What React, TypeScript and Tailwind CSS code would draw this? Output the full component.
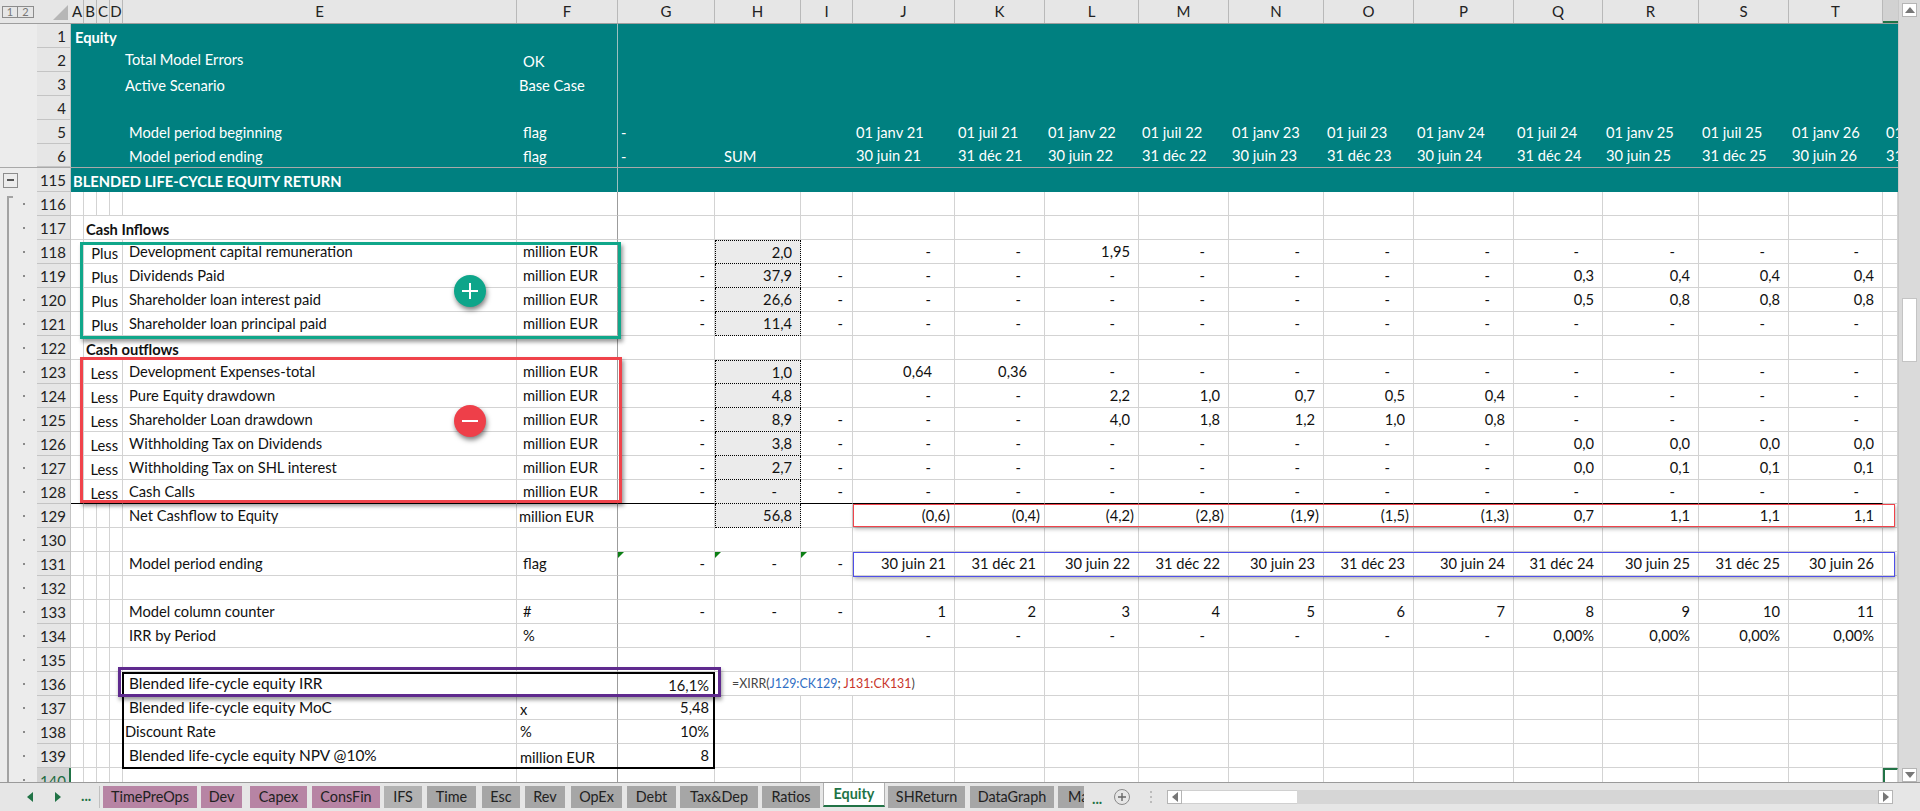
import React from "react";

const GRID = "grid grid-cols-[13px_13px_13px_13px_394px_101px_97px_86px_52px_102px_90px_94px_90px_95px_90px_100px_89px_96px_90px_94px_15px]";
const LETTERS = ["A","B","C","D","E","F","G","H","I","J","K","L","M","N","O","P","Q","R","S","T","U"];

type C = { t?: React.ReactNode; cls?: string };
type Cells = Record<number, C>;

function val(i: number, t: string): C {
  const pr = t === "-" ? (i === 6 || i === 8 ? "pr-[9px]" : "pr-[23px]") : t.startsWith("(") ? "pr-[4px]" : "pr-[8px]";
  return { t, cls: "justify-end " + pr };
}

function series(vals: string[]): Cells {
  const out: Cells = {};
  vals.forEach((v, k) => { out[9 + k] = val(9 + k, v); });
  return out;
}

const dashes = (n: number) => Array.from({ length: n }, () => "-");

function Gutter({ first }: { first?: boolean }) {
  return (
    <div className="w-[37px] h-full flex items-center bg-[#ececec]">
      {first ? (
        <div className="ml-[7px] w-[6px] h-[20px] self-end border-l-2 border-t-2 border-[#a3a3a3]" />
      ) : (
        <div className="ml-[7px] w-[6px] h-full border-l-2 border-[#a3a3a3]" />
      )}
      <div className="ml-[10px] w-[2px] h-[2px] bg-[#8a8a8a]" />
    </div>
  );
}

function Row({ n, cells = {}, noR = [], hTop, hCell, black, selected }: { n: number; cells?: Cells; noR?: number[]; hTop?: boolean; hCell?: boolean; black?: boolean; selected?: boolean }) {
  return (
    <div className="flex h-[24px] shrink-0">
      <Gutter first={n === 116} />
      <div className={selected
        ? "w-[34px] h-full flex items-center justify-end pr-[3px] pt-[2px] bg-[#d2d2d2] border-r-2 border-[#217346] text-[15px] text-[#1d6b41]"
        : "w-[34px] h-full flex items-center justify-end pr-[4px] pt-[2px] bg-[#e6e6e6] border-b border-r border-[#c4c4c4] text-[15px] text-[#222]"}>{n}</div>
      <div className={GRID + " flex-1 bg-white"}>
        {LETTERS.map((_, i) => {
          const c = cells[i] ?? {};
          let b = noR.includes(i) ? "" : i === 5 ? "border-r border-r-[#9c9c9c]" : "border-r border-r-[#d3d3d3]";
          let bb = black && i < 20 ? "border-b border-b-black" : "border-b border-b-[#d3d3d3]";
          let extra = "";
          if (i === 7 && hCell) {
            b = "border-x border-dotted border-x-black";
            bb = black ? "border-b border-b-black" : "border-b border-dotted border-b-black";
            extra = "bg-[#ebebeb] " + (hTop ? "border-t border-dotted border-t-black" : "");
          }
          if (i === 20 && selected) extra = "border-t-2 border-l-2 border-t-[#217346] border-l-[#217346]";
          return (
            <div key={i} className={`h-[24px] flex items-center whitespace-nowrap text-[#111] ${b} ${bb} ${extra} ${c.cls ?? ""}`}>
              {c.t}
            </div>
          );
        })}
      </div>
    </div>
  );
}

function TealRow({ n, cells = {}, last, left }: { n: number; cells?: Cells; last?: boolean; left?: React.ReactNode }) {
  return (
    <div className={`flex h-[24px] shrink-0 ${last ? "border-b border-[#a9a9a9]" : ""}`}>
      <div className="w-[37px] h-full flex items-center bg-[#ececec]">{left}</div>
      <div className="w-[34px] h-full flex items-center justify-end pr-[4px] pt-[2px] bg-[#e6e6e6] border-b border-r border-[#c4c4c4] text-[15px] text-[#222]">{n}</div>
      <div className={GRID + " flex-1 bg-[#008080] text-white overflow-hidden"}>
        {LETTERS.map((_, i) => (
          <div key={i} className={`h-full flex items-center whitespace-nowrap ${i === 5 ? "border-r border-r-[#9cc0c0]" : ""} ${cells[i]?.cls ?? ""}`}>
            {cells[i]?.t}
          </div>
        ))}
      </div>
    </div>
  );
}

const STARTS = ["01 janv 21","01 juil 21","01 janv 22","01 juil 22","01 janv 23","01 juil 23","01 janv 24","01 juil 24","01 janv 25","01 juil 25","01 janv 26","01 juil 26"];
const ENDS = ["30 juin 21","31 déc 21","30 juin 22","31 déc 22","30 juin 23","31 déc 23","30 juin 24","31 déc 24","30 juin 25","31 déc 25","30 juin 26","31 déc 26"];

function dateCells(list: string[]): Cells {
  const out: Cells = {};
  list.forEach((d, k) => { out[9 + k] = { t: d, cls: "pl-[3px] overflow-hidden" }; });
  return out;
}

const unit: C = { t: "million EUR", cls: "pl-[6px]" };
const tx = (t: string): C => ({ t, cls: "pl-[6px]" });
const sign = (t: string): C => ({ t, cls: "justify-end pr-[4px] pt-[3px]" });
const NO = [1, 2];

function flowRow(n: number, d: string, e: string, h: string, withGI: boolean, vals: string[], hTop?: boolean, black?: boolean) {
  const cells: Cells = { 3: sign(d), 4: tx(e), 5: unit, 7: val(7, h), ...series(vals) };
  if (withGI) { cells[6] = val(6, "-"); cells[8] = val(8, "-"); }
  return <Row key={n} n={n} cells={cells} noR={NO} hCell hTop={hTop} black={black} />;
}

const TABS = [
  { n: "TimePreOps", cls: "w-[94px] ml-[3px] bg-[#b784a4]" },
  { n: "Dev", cls: "w-[41px] ml-[4px] bg-[#b784a4]" },
  { n: "Capex", cls: "w-[57px] ml-[8px] bg-[#b784a4]" },
  { n: "ConsFin", cls: "w-[68px] ml-[5px] bg-[#b784a4]" },
  { n: "IFS", cls: "w-[38px] ml-[4px] bg-[#b2b2b2]" },
  { n: "Time", cls: "w-[49px] ml-[5px] bg-[#a6a6a6]" },
  { n: "Esc", cls: "w-[38px] ml-[6px] bg-[#a6a6a6]" },
  { n: "Rev", cls: "w-[40px] ml-[5px] bg-[#a6a6a6]" },
  { n: "OpEx", cls: "w-[51px] ml-[6px] bg-[#a6a6a6]" },
  { n: "Debt", cls: "w-[49px] ml-[5px] bg-[#a6a6a6]" },
  { n: "Tax&Dep", cls: "w-[78px] ml-[4px] bg-[#a6a6a6]" },
  { n: "Ratios", cls: "w-[58px] ml-[4px] bg-[#a6a6a6]" },
];
const TABS2 = [
  { n: "SHReturn", cls: "w-[77px] ml-[3px] bg-[#a6a6a6] justify-center" },
  { n: "DataGraph", cls: "w-[84px] ml-[5px] bg-[#a6a6a6] justify-center" },
  { n: "Ma", cls: "w-[26px] ml-[4px] bg-[#a6a6a6] overflow-hidden justify-start pl-[10px]" },
];

function Tri({ dir, cls }: { dir: "u" | "d" | "l" | "r"; cls?: string }) {
  const pts = { u: "0,6 10,6 5,0", d: "0,0 10,0 5,6", l: "6,0 6,10 0,5", r: "0,0 0,10 6,5" }[dir];
  const box = dir === "u" || dir === "d" ? "0 0 10 6" : "0 0 6 10";
  const size = dir === "u" || dir === "d" ? "w-[10px] h-[6px]" : "w-[6px] h-[10px]";
  return <svg viewBox={box} className={`${size} ${cls ?? ""}`}><polygon points={pts} fill="currentColor" /></svg>;
}

const ScrollBtn = ({ children, cls }: { children: React.ReactNode; cls: string }) => (
  <div className={`w-[15px] h-[14px] bg-white border border-[#b5b5b5] flex items-center justify-center text-[#777] ${cls}`}>{children}</div>
);

function GreenTri() {
  return <svg viewBox="0 0 6 6" className="absolute left-0 top-0 w-[6px] h-[6px]"><polygon points="0,0 6,0 0,6" fill="#0b7f14" /></svg>;
}

export default function App() {
  return (
    <div className="w-[1920px] h-[811px] flex flex-col overflow-hidden bg-[#e6e6e6] font-[family-name:Lato,sans-serif] text-[14.7px] leading-none">
      <div className="flex h-[783px] shrink-0 border-b border-[#9a9a9a]">
        <div className="relative w-[1898px] overflow-hidden flex flex-col">
          {/* column header */}
          <div className="flex h-[24px] shrink-0 border-b border-[#9e9e9e] bg-[#e6e6e6]">
            <div className="w-[71px] flex items-center">
              <div className="ml-[2px] w-[16px] h-[12px] border border-[#8c8c8c] flex items-center justify-center text-[11px] text-[#777]">1</div>
              <div className="w-[16px] h-[12px] border border-l-0 border-[#8c8c8c] flex items-center justify-center text-[11px] text-[#777]">2</div>
              <svg viewBox="0 0 15 15" className="ml-[19px] mt-[2px] w-[15px] h-[15px]"><polygon points="15,0 15,15 0,15" fill="#b6b6b6" /></svg>
            </div>
            <div className={GRID + " flex-1"}>
              {LETTERS.map((l, i) => (
                <div key={l} className={i === 20
                  ? "flex items-center justify-center bg-[#d2d2d2] border-b-2 border-[#217346] text-[15px]"
                  : "flex items-center justify-center border-r border-[#b9b9b9] text-[15px] text-[#222]"}>{i === 20 ? "" : l}</div>
              ))}
            </div>
          </div>

          <TealRow n={1} cells={{ 0: { t: <b className="font-bold">Equity</b>, cls: "pl-[4px] pt-[2px]" } }} />
          <TealRow n={2} cells={{ 4: { t: "Total Model Errors", cls: "pl-[2px] pb-[2px]" }, 5: { t: "OK", cls: "pl-[6px] pt-[3px]" } }} />
          <TealRow n={3} cells={{ 4: { t: "Active Scenario", cls: "pl-[2px] pt-[2px]" }, 5: { t: "Base Case", cls: "pl-[2px] pt-[2px]" } }} />
          <TealRow n={4} />
          <TealRow n={5} cells={{ 4: { t: "Model period beginning", cls: "pl-[6px]" }, 5: { t: "flag", cls: "pl-[6px]" }, 6: { t: "-", cls: "pl-[3px]" }, ...dateCells(STARTS) }} />
          <TealRow n={6} last cells={{ 4: { t: "Model period ending", cls: "pl-[6px] pt-[2px]" }, 5: { t: "flag", cls: "pl-[6px] pt-[2px]" }, 6: { t: "-", cls: "pl-[3px] pt-[2px]" }, 7: { t: "SUM", cls: "pl-[9px] pt-[2px]" }, ...dateCells(ENDS) }} />
          <TealRow n={115}
            left={<div className="ml-[3px] w-[15px] h-[15px] border border-[#8c8c8c] flex items-center justify-center"><div className="w-[7px] h-[2px] bg-[#555]" /></div>}
            cells={{ 0: { t: <b className="font-bold">BLENDED LIFE-CYCLE EQUITY RETURN</b>, cls: "pl-[2px] pt-[2px]" } }} />

          <Row n={116} />
          <Row n={117} noR={[1, 2, 3]} cells={{ 1: { t: <b className="font-bold">Cash Inflows</b>, cls: "pl-[2px] pt-[3px]" } }} />
          {flowRow(118, "Plus", "Development capital remuneration", "2,0", false, ["-", "-", "1,95", ...dashes(8)], true)}
          {flowRow(119, "Plus", "Dividends Paid", "37,9", true, [...dashes(7), "0,3", "0,4", "0,4", "0,4"])}
          {flowRow(120, "Plus", "Shareholder loan interest paid", "26,6", true, [...dashes(7), "0,5", "0,8", "0,8", "0,8"])}
          {flowRow(121, "Plus", "Shareholder loan principal paid", "11,4", true, dashes(11))}
          <Row n={122} noR={[1, 2, 3]} cells={{ 1: { t: <b className="font-bold">Cash outflows</b>, cls: "pl-[2px] pt-[3px]" } }} />
          <Row n={123} noR={NO} hCell hTop cells={{
            3: sign("Less"), 4: tx("Development Expenses-total"), 5: unit, 7: val(7, "1,0"),
            ...series(["0,64", "0,36", ...dashes(9)]),
            9: { t: "0,64", cls: "justify-end pr-[22px]" }, 10: { t: "0,36", cls: "justify-end pr-[17px]" },
          }} />
          {flowRow(124, "Less", "Pure Equity drawdown", "4,8", false, ["-", "-", "2,2", "1,0", "0,7", "0,5", "0,4", ...dashes(4)])}
          {flowRow(125, "Less", "Shareholder Loan drawdown", "8,9", true, ["-", "-", "4,0", "1,8", "1,2", "1,0", "0,8", ...dashes(4)])}
          {flowRow(126, "Less", "Withholding Tax on Dividends", "3,8", true, [...dashes(7), "0,0", "0,0", "0,0", "0,0"])}
          {flowRow(127, "Less", "Withholding Tax on SHL interest", "2,7", true, [...dashes(7), "0,0", "0,1", "0,1", "0,1"])}
          {flowRow(128, "Less", "Cash Calls", "-", true, dashes(11), false, true)}
          <Row n={129} hCell cells={{
            4: tx("Net Cashflow to Equity"),
            5: { t: "million EUR", cls: "pl-[2px] pt-[2px]" },
            7: val(7, "56,8"),
            ...series(["(0,6)", "(0,4)", "(4,2)", "(2,8)", "(1,9)", "(1,5)", "(1,3)", "0,7", "1,1", "1,1", "1,1"]),
          }} />
          <Row n={130} />
          <Row n={131} cells={{
            4: tx("Model period ending"), 5: tx("flag"),
            6: { ...val(6, "-"), t: <><GreenTri />-</>, cls: "relative justify-end pr-[9px]" },
            7: { ...val(7, "-"), t: <><GreenTri />-</>, cls: "relative justify-end pr-[23px]" },
            8: { ...val(8, "-"), t: <><GreenTri />-</>, cls: "relative justify-end pr-[9px]" },
            ...series(ENDS.slice(0, 11)),
          }} />
          <Row n={132} />
          <Row n={133} cells={{
            4: tx("Model column counter"), 5: tx("#"), 6: val(6, "-"), 7: val(7, "-"), 8: val(8, "-"),
            ...series(["1","2","3","4","5","6","7","8","9","10","11"]),
          }} />
          <Row n={134} cells={{ 4: tx("IRR by Period"), 5: tx("%"), ...series([...dashes(7), "0,00%", "0,00%", "0,00%", "0,00%"]) }} />
          <Row n={135} />
          <Row n={136} noR={[7, 8]} cells={{
            4: { t: "Blended life-cycle equity IRR", cls: "pl-[6px] text-[15.4px]" },
            6: { t: "16,1%", cls: "justify-end pr-[5px] pt-[4px]" },
            7: { t: (
              <span className="text-[12.4px]">
                <span className="text-[#444]">=XIRR(</span>
                <span className="text-[#2f6ec4]">J129:CK129</span>
                <span className="text-[#444]">; </span>
                <span className="text-[#c8352b]">J131:CK131</span>
                <span className="text-[#444]">)</span>
              </span>
            ), cls: "pl-[17px] pt-[2px]" },
          }} />
          <Row n={137} cells={{ 4: { t: "Blended life-cycle equity MoC", cls: "pl-[6px] text-[15.4px]" }, 5: { t: "x", cls: "pl-[3px] pt-[4px]" }, 6: { t: "5,48", cls: "justify-end pr-[5px]" } }} />
          <Row n={138} cells={{ 4: { t: "Discount Rate", cls: "pl-[2px]" }, 5: { t: "%", cls: "pl-[3px]" }, 6: { t: "10%", cls: "justify-end pr-[5px]" } }} />
          <Row n={139} cells={{ 4: { t: "Blended life-cycle equity NPV @10%", cls: "pl-[6px] text-[15.4px]" }, 5: { t: "million EUR", cls: "pl-[3px] pt-[4px]" }, 6: { t: "8", cls: "justify-end pr-[5px]" } }} />
          <Row n={140} selected />

          {/* annotations drawn over the sheet */}
          <div className="absolute left-[80px] top-[242px] w-[541px] h-[97px] border-[3px] border-[#10a78a] shadow-[2px_3px_4px_rgba(0,0,0,0.4)]" />
          <div className="absolute left-[80px] top-[357px] w-[542px] h-[146px] border-[3px] border-[#f0434b] shadow-[2px_3px_4px_rgba(0,0,0,0.4)]" />
          <div className="absolute left-[454px] top-[275px] w-[32px] h-[32px] rounded-full bg-[#0ea58a] flex items-center justify-center shadow-[1px_3px_5px_rgba(0,0,0,0.5)]">
            <svg viewBox="0 0 16 16" className="w-[16px] h-[16px]"><path d="M8 0v16M0 8h16" stroke="#fff" strokeWidth="2" /></svg>
          </div>
          <div className="absolute left-[454px] top-[405px] w-[32px] h-[32px] rounded-full bg-[#ee3f49] flex items-center justify-center shadow-[1px_3px_5px_rgba(0,0,0,0.5)]">
            <svg viewBox="0 0 16 16" className="w-[16px] h-[16px]"><path d="M0 8h16" stroke="#fff" strokeWidth="2" /></svg>
          </div>
          <div className="absolute left-[853px] top-[504px] w-[1042px] h-[23px] border border-[#f0434b] shadow-[1px_2px_4px_rgba(0,0,0,0.3)]" />
          <div className="absolute left-[853px] top-[552px] w-[1042px] h-[25px] border border-[#4f4fe8] shadow-[1px_2px_4px_rgba(0,0,0,0.3)]" />
          <div className="absolute left-[122px] top-[672px] w-[593px] h-[97px] border-2 border-black" />
          <div className="absolute left-[118px] top-[667px] w-[603px] h-[30px] border-[3px] border-[#5f2a8e] shadow-[1px_3px_4px_rgba(0,0,0,0.4)]" />
        </div>

        {/* vertical scrollbar */}
        <div className="w-[22px] flex flex-col items-center bg-[#dadada] border-l border-[#c8c8c8]">
          <ScrollBtn cls="mt-[3px]"><Tri dir="u" /></ScrollBtn>
          <div className="mt-[281px] w-[15px] h-[64px] bg-white border border-[#c4c4c4]" />
          <ScrollBtn cls="mt-auto"><Tri dir="d" /></ScrollBtn>
        </div>
      </div>

      {/* sheet tabs */}
      <div className="flex-1 flex text-[14.4px] text-[#222]">
        <div className="w-[100px] flex items-center shrink-0 border-r border-[#c0c0c0] my-[3px]">
          <Tri dir="l" cls="ml-[27px] text-[#217346]" />
          <Tri dir="r" cls="ml-[22px] text-[#217346]" />
          <span className="ml-[20px] font-bold text-[#217346] leading-none pb-[2px]">...</span>
        </div>
        {TABS.map((t) => (
          <div key={t.n} className={`h-[22px] mt-[3px] pt-[1px] flex items-center justify-center shrink-0 ${t.cls}`}>{t.n}</div>
        ))}
        <div className="w-[62px] ml-[3px] h-[24px] shrink-0 bg-white border-x border-[#b0b0b0] border-b-2 border-b-[#217346] flex items-center justify-center font-bold text-[#217346]">Equity</div>
        {TABS2.map((t) => (
          <div key={t.n} className={`h-[22px] mt-[3px] pt-[1px] flex items-center shrink-0 ${t.cls}`}>{t.n}</div>
        ))}
        <span className="ml-[8px] mt-[9px] font-bold text-[#217346] leading-none">...</span>
        <div className="ml-[12px] mt-[6px] w-[16px] h-[16px] rounded-full border border-[#8a8a8a] flex items-center justify-center text-[#666]">
          <svg viewBox="0 0 8 8" className="w-[8px] h-[8px]"><path d="M4 0v8M0 4h8" stroke="currentColor" strokeWidth="1.4" /></svg>
        </div>
        <div className="ml-[20px] mt-[8px] flex flex-col gap-[3px]">
          <div className="w-[2px] h-[2px] bg-[#bbb]" />
          <div className="w-[2px] h-[2px] bg-[#bbb]" />
          <div className="w-[2px] h-[2px] bg-[#bbb]" />
        </div>
        <div className="ml-[15px] mt-[7px] w-[726px] h-[14px] flex bg-[#d6d6d6]">
          <ScrollBtn cls=""><Tri dir="l" /></ScrollBtn>
          <div className="w-[115px] bg-white border-y border-[#d0d0d0]" />
          <div className="flex-1" />
          <ScrollBtn cls=""><Tri dir="r" /></ScrollBtn>
        </div>
      </div>
    </div>
  );
}
